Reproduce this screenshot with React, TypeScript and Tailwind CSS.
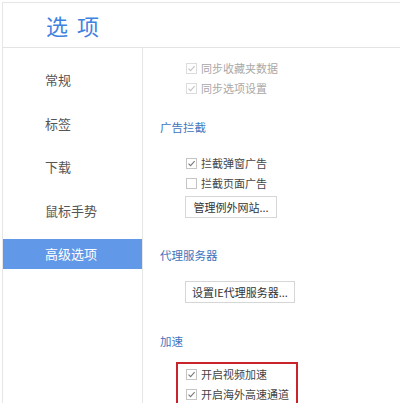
const font = { fontFamily: '"Noto Sans CJK SC", "Noto Sans", sans-serif' };

function Check({ checked, disabled }: { checked?: boolean; disabled?: boolean }) {
  return (
    <span
      className={`flex h-[11px] w-[11px] shrink-0 items-center justify-center border ${
        disabled ? "border-[#dcdcdc]" : "border-[#c4c4c4]"
      } bg-white`}
    >
      {checked && (
        <svg width="9" height="9" viewBox="0 0 9 9">
          <path
            d="M1.5 4.6 L3.6 6.6 L7.6 2.2"
            fill="none"
            stroke={disabled ? "#c4c4c4" : "#7a7a7a"}
            strokeWidth="1.1"
          />
        </svg>
      )}
    </span>
  );
}

function Row({
  label,
  checked,
  disabled,
  className,
}: {
  label: string;
  checked?: boolean;
  disabled?: boolean;
  className?: string;
}) {
  return (
    <div className={`flex h-[20px] items-center gap-[4px] whitespace-nowrap ${className ?? "pl-[43px]"}`}>
      <Check checked={checked} disabled={disabled} />
      <span className={`text-[11px] ${disabled ? "text-[#a8a8a8]" : "text-[#444]"}`}>{label}</span>
    </div>
  );
}

function Heading({ children, className }: { children: React.ReactNode; className?: string }) {
  return (
    <div className={`flex h-[20px] items-center pl-[17px] text-[11.5px] text-[#3d74bd] ${className ?? ""}`}>
      {children}
    </div>
  );
}

function Btn({ children, className }: { children: React.ReactNode; className?: string }) {
  return (
    <div
      className={`ml-[42px] flex items-center justify-center whitespace-nowrap border border-[#d6d6d6] bg-white text-[11px] text-[#333] ${
        className ?? ""
      }`}
    >
      {children}
    </div>
  );
}

export default function App() {
  const nav = ["常规", "标签", "下载", "鼠标手势", "高级选项"];
  return (
    <div className="h-[403px] w-[400px] overflow-hidden bg-white pt-[2px]" style={font}>
      <div className="ml-[2px] h-full border-l border-t border-[#e6e6e6]">
        {/* header */}
        <div className="flex h-[45px] items-center border-b border-[#e3e3e3] pl-[43px] text-[22px] tracking-[9px] text-[#3f82e0]">
          选项
        </div>
        <div className="flex">
          {/* sidebar */}
          <div className="flex h-[360px] w-[140px] flex-col gap-[13.5px] border-r border-[#e6e6e6] pt-[17px]">
            {nav.map((n, i) => (
              <div
                key={n}
                className={`flex h-[30px] items-center pl-[42px] text-[13px] ${
                  i === 4 ? "bg-[#6198e8] text-white" : "text-[#555]"
                }`}
              >
                {n}
              </div>
            ))}
          </div>
          {/* content */}
          <div className="flex flex-1 flex-col pt-[10px]">
            <Row label="同步收藏夹数据" checked disabled />
            <Row label="同步选项设置" checked disabled />
            <Heading className="mt-[20px]">广告拦截</Heading>
            <div className="mt-[15px]">
              <Row label="拦截弹窗广告" checked />
              <Row label="拦截页面广告" />
            </div>
            <Btn className="mt-[3px] h-[22px] w-[92px]">管理例外网站...</Btn>
            <Heading className="mt-[28px]">代理服务器</Heading>
            <Btn className="mt-[15px] h-[22px] w-[110px]">设置IE代理服务器...</Btn>
            <Heading className="mt-[29px]">加速</Heading>
            <div className="ml-[33px] mt-[10px] w-[122px] border-2 border-b-0 border-[#c9242b] pb-[6px]">
              <Row label="开启视频加速" checked className="pl-[8px]" />
              <Row label="开启海外高速通道" checked className="pl-[8px]" />
            </div>
          </div>
        </div>
      </div>
    </div>
  );
}
